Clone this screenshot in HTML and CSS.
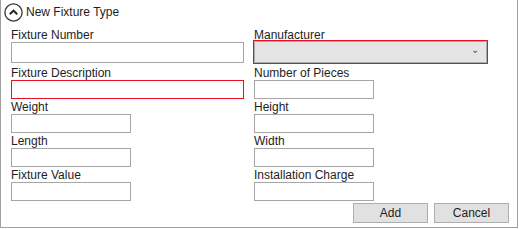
FILE: index.html
```
<html>
	<head>
		<link rel="stylesheet" href="styles.css">
	</head>
	<body>
	<div class="panel">
		<div class="header">
			<svg class="toggle" width="19" height="19" viewBox="0 0 19 19">
				<circle cx="9.5" cy="9.5" r="8.6" fill="none" stroke="#333" stroke-width="1.3"/>
				<path d="M5.8 11.3 L9.5 7.6 L13.2 11.3" fill="none" stroke="#222" stroke-width="2"/>
			</svg>
			<span class="title">New Fixture Type</span>
		</div>

		<div class="formGrid">
			<div class="field">
				<div class="lbl">Fixture Number</div>
				<input type="text" class="box wide first">
			</div>
			<div class="field">
				<div class="lbl">Manufacturer</div>
				<div class="combo"><span class="chev">&#8964;</span></div>
			</div>

			<div class="field">
				<div class="lbl">Fixture Description</div>
				<input type="text" class="box wide invalid">
			</div>
			<div class="field">
				<div class="lbl">Number of Pieces</div>
				<input type="text" class="box small">
			</div>

			<div class="field">
				<div class="lbl">Weight</div>
				<input type="text" class="box small">
			</div>
			<div class="field">
				<div class="lbl">Height</div>
				<input type="text" class="box small">
			</div>

			<div class="field">
				<div class="lbl">Length</div>
				<input type="text" class="box small">
			</div>
			<div class="field">
				<div class="lbl">Width</div>
				<input type="text" class="box small">
			</div>

			<div class="field">
				<div class="lbl">Fixture Value</div>
				<input type="text" class="box small">
			</div>
			<div class="field">
				<div class="lbl">Installation Charge</div>
				<input type="text" class="box small">
			</div>
		</div>

		<div class="buttonRow">
			<button class="btn">Add</button>
			<button class="btn">Cancel</button>
		</div>
	</div>
	</body>
</html>
```

FILE: styles.css
```
body {
	margin: 0;
	background: #fff;
	font-family: "Segoe UI", "Liberation Sans", Arial, sans-serif;
	font-size: 12px;
	color: #1e1e1e;
}

/* outer group box */
.panel {
	width: 516px;
	height: 227px;
	border: 1px solid #a0a0a0;
	border-top: none;
	display: flex;
	flex-direction: column;
}

.header {
	display: flex;
	align-items: center;
	height: 24px;
	padding-left: 3px;
}

.title {
	margin-left: 3px;
	font-size: 12px;
	color: #1e1e1e;
}

.formGrid {
	display: grid;
	grid-template-columns: 233px 233px;
	grid-template-rows: 38px repeat(4, 34px);
	column-gap: 10px;
	padding: 4px 0 0 10px;
}

.field {
	display: flex;
	flex-direction: column;
}

.lbl {
	height: 14px;
	line-height: 15px;
}

.box {
	box-sizing: border-box;
	border: 1px solid #a6a6a6;
	background: #fff;
	height: 19px;
	margin: 0;
	padding: 0 3px;
	font-family: inherit;
	font-size: 12px;
	outline: none;
}

.box.first {
	height: 21px;
}

.wide {
	width: 233px;
}

.small {
	width: 120px;
}

.invalid {
	border-color: #e81123;
}

/* manufacturer drop down */
.combo {
	box-sizing: border-box;
	width: 235px;
	height: 24px;
	margin: -2px 0 0 -1px;
	border: 1px solid #e81123;
	box-shadow: inset 0 0 0 1px #adadad;
	background: #e5e5e5;
	position: relative;
}

.chev {
	position: absolute;
	right: 8px;
	top: 3px;
	font-size: 10px;
	color: #555;
}

.buttonRow {
	display: flex;
	justify-content: flex-end;
	gap: 6px;
	padding: 1px 8px 0 0;
}

.btn {
	box-sizing: border-box;
	width: 75px;
	height: 20px;
	border: 1px solid #adadad;
	background: #e1e1e1;
	font-family: inherit;
	font-size: 12px;
	color: #1e1e1e;
	padding: 0;
}
```
